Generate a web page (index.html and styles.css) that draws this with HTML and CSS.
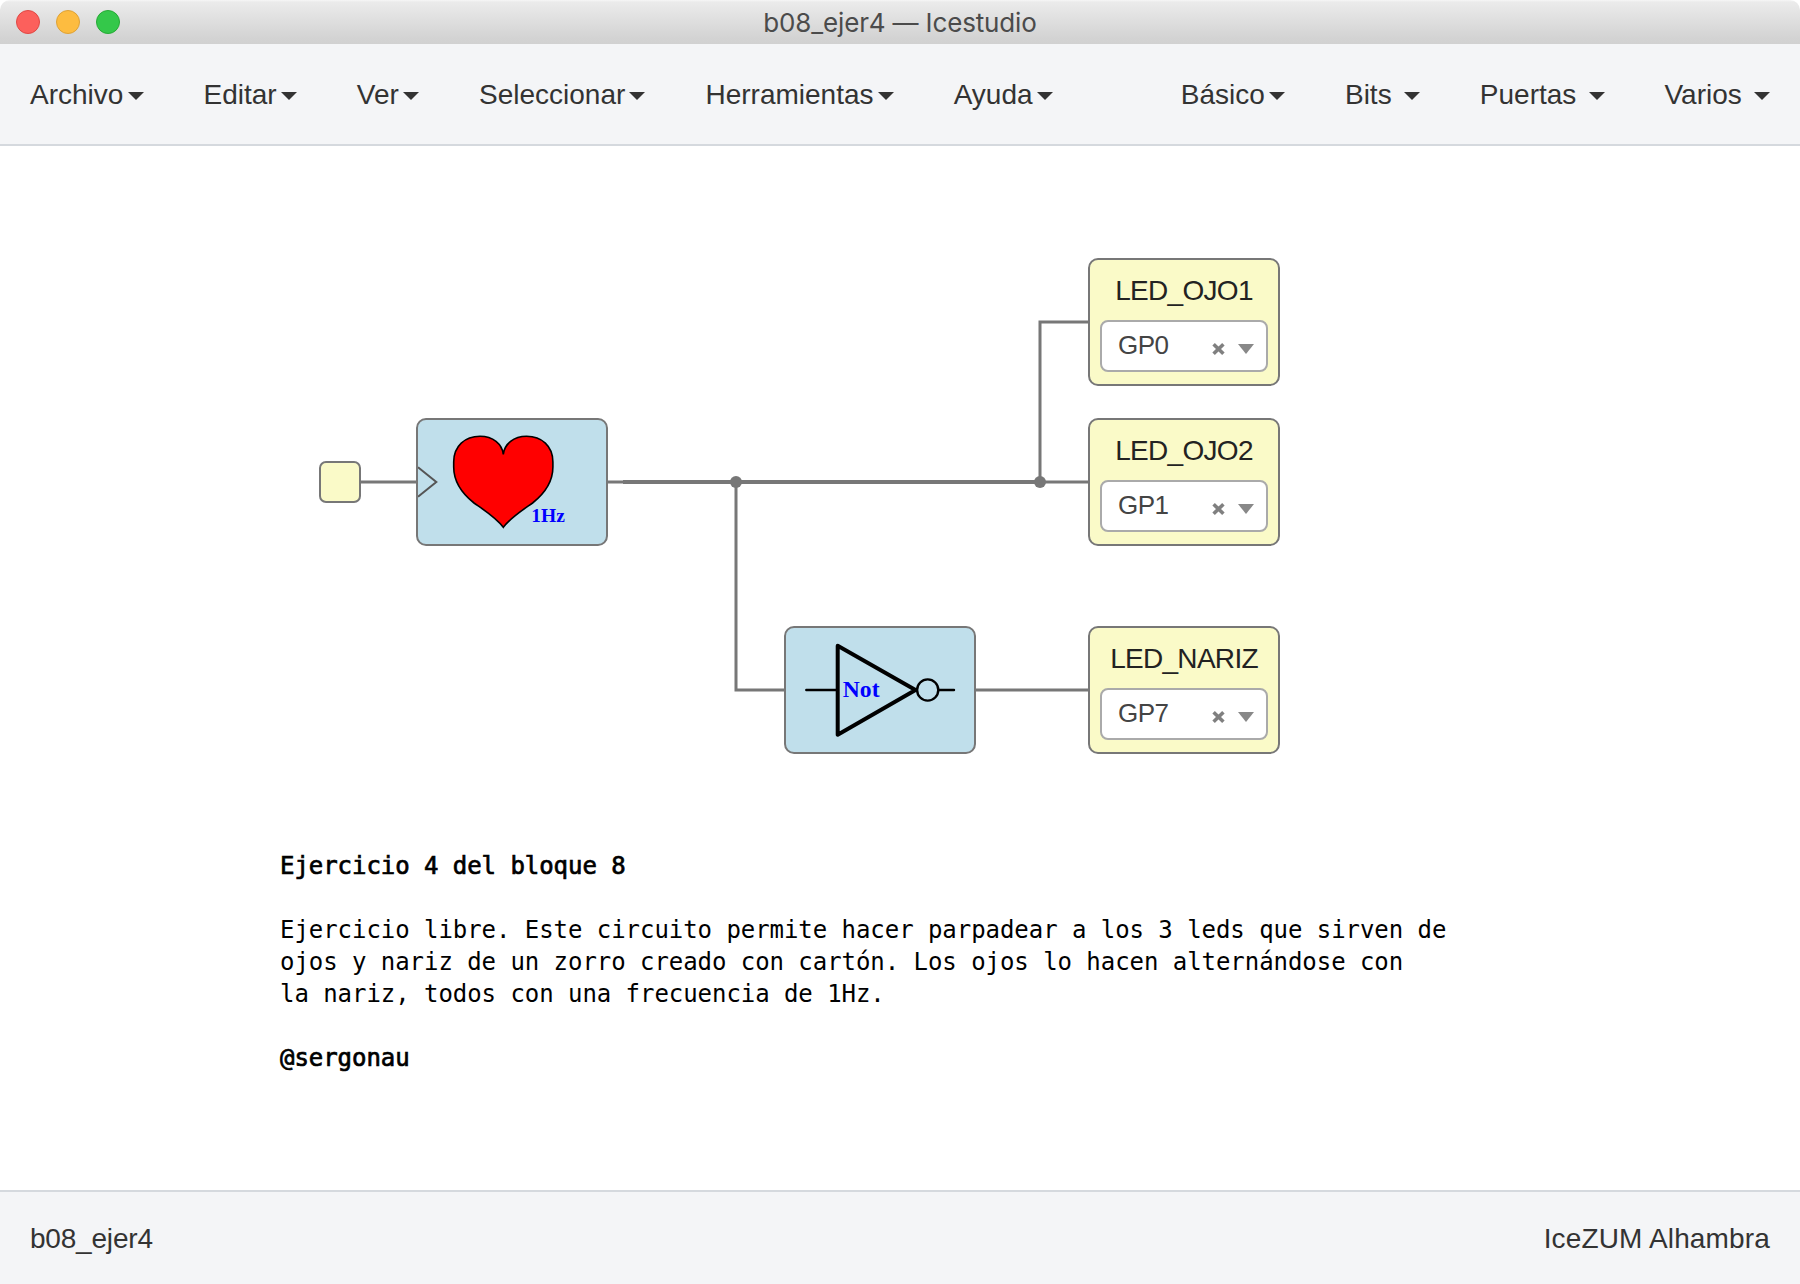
FILE: index.html
```html
<!DOCTYPE html>
<html lang="es">
<head>
<meta charset="utf-8">
<title>b08_ejer4 — Icestudio</title>
<link rel="stylesheet" href="styles.css">
</head>
<body>
<div class="window">
  <header class="titlebar">
    <div class="lights">
      <span class="light light-close"></span>
      <span class="light light-min"></span>
      <span class="light light-max"></span>
    </div>
    <h1 class="window-title">b08_ejer4 — Icestudio</h1>
  </header>

  <nav class="menubar">
    <div class="menu-group">
      <a class="menu">Archivo<i class="caret"></i></a>
      <a class="menu">Editar<i class="caret"></i></a>
      <a class="menu">Ver<i class="caret"></i></a>
      <a class="menu">Seleccionar<i class="caret"></i></a>
      <a class="menu">Herramientas<i class="caret"></i></a>
      <a class="menu">Ayuda<i class="caret"></i></a>
    </div>
    <div class="menu-group">
      <a class="menu">Básico<i class="caret"></i></a>
      <a class="menu menu-wide">Bits<i class="caret"></i></a>
      <a class="menu menu-wide">Puertas<i class="caret"></i></a>
      <a class="menu menu-wide">Varios<i class="caret"></i></a>
    </div>
  </nav>

  <main class="canvas">
    <svg class="wires" width="1800" height="1044" viewBox="0 0 1800 1044">
      <path class="wire" d="M361 336H416M608 336H1088M1040 336V176H1088M736 336V544H784M976 544H1088"/>
      <path class="wire wire-shared" d="M623 336H1040"/>
      <circle class="junction" cx="736" cy="336" r="6"/>
      <circle class="junction" cx="1040" cy="336" r="6"/>
    </svg>

    <div class="block block-clock"></div>

    <div class="block block-code block-heart">
      <svg width="188" height="124" viewBox="2 2 188 124">
        <path class="clock-mark" d="M2 49.3L20.3 64L2 78.7"/>
        <path class="heart" d="M87.3 109.3C80 99.5 68 92 58 85C46 75.5 37.7 64 37.7 49V44C37.7 28 49 18.3 64 18.3C77 18.3 86 26 87.3 36.3C88.6 26 97.6 18.3 110.6 18.3C125.6 18.3 136.9 28 136.9 44V49C136.9 64 128.6 75.5 116.6 85C106.6 92 94.6 99.5 87.3 109.3Z"/>
        <text class="symbol-text" x="115.3" y="104.3" font-size="19.5">1Hz</text>
      </svg>
    </div>

    <div class="block block-code block-not">
      <svg width="188" height="124" viewBox="2 2 188 124">
        <path class="gate-pin" d="M22.3 64H53M155 64H170"/>
        <path class="gate-body" d="M53.7 19.8L131.5 64L53.7 108.7Z"/>
        <circle class="gate-pin" cx="143.7" cy="64" r="10.6"/>
        <text class="symbol-text" x="58.8" y="71.3" font-size="23.6">Not</text>
      </svg>
    </div>

    <div class="block block-output block-led1">
      <div class="label">LED_OJO1</div>
      <div class="select"><span class="pin">GP0</span>
        <svg class="clear" width="13" height="12" viewBox="0 0 13 12"><path d="M1.6 1.3L11.4 10.7M11.4 1.3L1.6 10.7"/></svg><i class="arrow"></i></div>
    </div>
    <div class="block block-output block-led2">
      <div class="label">LED_OJO2</div>
      <div class="select"><span class="pin">GP1</span>
        <svg class="clear" width="13" height="12" viewBox="0 0 13 12"><path d="M1.6 1.3L11.4 10.7M11.4 1.3L1.6 10.7"/></svg><i class="arrow"></i></div>
    </div>
    <div class="block block-output block-led3">
      <div class="label">LED_NARIZ</div>
      <div class="select"><span class="pin">GP7</span>
        <svg class="clear" width="13" height="12" viewBox="0 0 13 12"><path d="M1.6 1.3L11.4 10.7M11.4 1.3L1.6 10.7"/></svg><i class="arrow"></i></div>
    </div>

    <div class="note">
      <p class="strong">Ejercicio 4 del bloque 8</p>
      <p>Ejercicio libre. Este circuito permite hacer parpadear a los 3 leds que sirven de<br>ojos y nariz de un zorro creado con cartón. Los ojos lo hacen alternándose con<br>la nariz, todos con una frecuencia de 1Hz.</p>
      <p class="strong">@sergonau</p>
    </div>
  </main>

  <footer class="statusbar">
    <span class="project">b08_ejer4</span>
    <span class="board">IceZUM Alhambra</span>
  </footer>
</div>
</body>
</html>
```
FILE: styles.css
```css
* {
  box-sizing: border-box;
}

body {
  margin: 0;
  background: #fff;
  color: #333;
  font-family: "Liberation Sans", Arial, sans-serif;
  font-size: 28px;
}

.window {
  display: flex;
  flex-direction: column;
  width: 1800px;
  height: 1284px;
  overflow: hidden;
}

.titlebar {
  display: grid;
  grid-template-columns: 200px 1fr 200px;
  align-items: center;
  height: 44px;
  border-radius: 10px 10px 0 0;
  background: linear-gradient(#f6f6f6 0, #ebebeb 2px, #e9e9e9 5px, #d3d3d3 38px, #d1d1d1);
}

.lights {
  display: flex;
  gap: 16px;
  padding-left: 16px;
}

.light {
  width: 24px;
  height: 24px;
  border: 1px solid;
  border-radius: 50%;
}

.light-close {
  background: #fc605c;
  border-color: #e04844;
}

.light-min {
  background: #fdbc40;
  border-color: #dea236;
}

.light-max {
  background: #34c84a;
  border-color: #26aa35;
}

.window-title {
  margin: 0;
  padding-top: 1px;
  text-align: center;
  font: 400 26px/43px Inter, "Liberation Sans", sans-serif;
  color: #4b4b4b;
  letter-spacing: -0.15px;
}

.menubar {
  display: flex;
  justify-content: space-between;
  height: 102px;
  background: #f4f5f7;
  border-bottom: 2px solid #d5d9de;
}

.menu-group {
  display: flex;
}

.menu {
  display: flex;
  align-items: center;
  padding: 2px 30px 0;
  line-height: 98px;
}

.caret {
  margin: 2px 0 0 4.15px;
  border: 8px solid transparent;
  border-top-color: #333;
  border-bottom: 0;
}

.menu-wide .caret {
  margin-left: 12.2px;
}

.canvas {
  position: relative;
  flex: 1;
  background: #fff;
}

.wires {
  position: absolute;
  left: 0;
  top: 0;
}

.wire {
  fill: none;
  stroke: #777;
  stroke-width: 3;
}

.wire-shared {
  stroke-width: 4;
}

.junction {
  fill: #777;
}

.block {
  position: absolute;
  width: 192px;
  height: 128px;
  border: 2px solid #777;
  border-radius: 10px;
}

.block svg {
  display: block;
}

.block-code {
  background: #c0dfeb;
}

.block-output {
  padding: 10px 10px 0;
  background: #fafac8;
}

.block-clock {
  left: 319px;
  top: 315px;
  width: 42px;
  height: 42px;
  border-radius: 7px;
  background: #fafac8;
}

.block-heart {
  left: 416px;
  top: 272px;
}

.block-not {
  left: 784px;
  top: 480px;
}

.block-led1 {
  left: 1088px;
  top: 112px;
}

.block-led2 {
  left: 1088px;
  top: 272px;
}

.block-led3 {
  left: 1088px;
  top: 480px;
}

.clock-mark {
  fill: none;
  stroke: #555;
  stroke-width: 2;
}

.heart {
  fill: #f00;
  stroke: #000;
  stroke-width: 1.6;
}

.symbol-text {
  fill: #00f;
  font-family: "Liberation Serif", "Times New Roman", serif;
  font-weight: 700;
}

.gate-pin {
  fill: none;
  stroke: #000;
  stroke-width: 2.4;
  stroke-linecap: round;
}

.gate-body {
  fill: none;
  stroke: #000;
  stroke-width: 4;
  stroke-linejoin: round;
}

.label {
  height: 50px;
  line-height: 42px;
  text-align: center;
  letter-spacing: -0.7px;
  color: #222;
}

.select {
  display: flex;
  align-items: center;
  width: 168px;
  height: 52px;
  padding: 0 12px 0 16px;
  background: #fff;
  border: 2px solid #aaa;
  border-radius: 8px;
}

.pin {
  flex: 1;
  margin-top: -3px;
  font-size: 26px;
  line-height: 44px;
  letter-spacing: -0.5px;
  color: #444;
}

.clear {
  margin: 6px 13px 0 0;
  fill: none;
  stroke: #808080;
  stroke-width: 3.6;
}

.arrow {
  margin-top: 5px;
  border: 8px solid transparent;
  border-top: 10px solid #888;
  border-bottom: 0;
}

.note {
  position: absolute;
  left: 280px;
  top: 704px;
  color: #000;
  font: 24px/32px "DejaVu Sans Mono", "Liberation Mono", monospace;
  letter-spacing: -0.05px;
  white-space: nowrap;
}

.note p {
  margin: 0 0 32px;
}

.note .strong {
  -webkit-text-stroke: 0.7px #000;
}

.statusbar {
  display: flex;
  justify-content: space-between;
  height: 94px;
  padding: 0 30px;
  line-height: 94px;
  background: #f4f5f7;
  border-top: 2px solid #d5d9de;
}

.project {
  letter-spacing: -0.2px;
}

.board {
  letter-spacing: 0.15px;
}
```
